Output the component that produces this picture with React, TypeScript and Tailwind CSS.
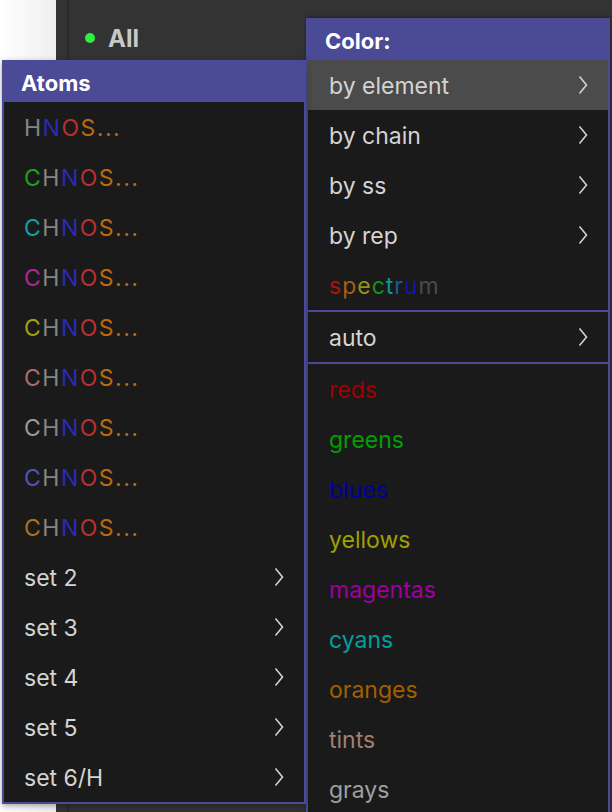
import React from 'react';

const GRAY = '#858585';
const N_BLUE = '#2a2ab8';
const O_RED = '#b83030';
const S_ORANGE = '#b86a10';

// first-letter colours of the atom sets
const ATOM_ROWS: (string | null)[] = [
  null,
  '#22a022',
  '#14a0a0',
  '#b02890',
  '#a0a012',
  '#b06c6c',
  '#9a9a9a',
  '#5454b4',
  '#b07020',
];

const SETS = ['set 2', 'set 3', 'set 4', 'set 5', 'set 6/H'];

const SPECTRUM: [string, string][] = [
  ['s', '#a81414'],
  ['p', '#a86010'],
  ['e', '#949414'],
  ['c', '#149414'],
  ['t', '#149494'],
  ['r', '#1460a0'],
  ['u', '#1414a8'],
  ['m', '#4a4a4a'],
];

const COLOR_SETS: [string, string][] = [
  ['reds', '#a00000'],
  ['greens', '#00a000'],
  ['blues', '#0000a0'],
  ['yellows', '#a0a000'],
  ['magentas', '#a000a0'],
  ['cyans', '#00a0a0'],
  ['oranges', '#a06000'],
  ['tints', '#a08070'],
  ['grays', '#a0a0a0'],
];

function Chevron() {
  return (
    <svg width="10" height="20" viewBox="0 0 10 20" fill="none">
      <path d="M1.5 1.5L8.5 10L1.5 18.5" stroke="#d2d2d2" strokeWidth="1.6" />
    </svg>
  );
}

function Row({ children, arrow, highlight, px }: {
  children: React.ReactNode; arrow?: boolean; highlight?: boolean; px: string;
}) {
  return (
    <div className={`h-[50px] flex items-center justify-between ${px} ${highlight ? 'bg-[#4b4b4b]' : ''}`}>
      <span className="text-[23px] text-[#d4d4d4] leading-none pt-[3px]">{children}</span>
      {arrow && <Chevron />}
    </div>
  );
}

export default function App() {
  return (
    <div className="relative w-[612px] h-[812px] overflow-hidden flex font-['Inter','Liberation_Sans',sans-serif]">
      {/* Light strip on the left */}
      <div className="w-[56px] h-full bg-gradient-to-r from-white to-[#efefef]" />

      {/* Dark side panel */}
      <div className="flex-1 h-full bg-[#333333] flex">
        <div className="w-[11px]" />
        <div className="w-[2px] h-full bg-[#2a2a2a]" />
        <div className="flex-1 pt-[19px]">
          <div className="flex items-center gap-[13px] pl-[16px] h-[38px]">
            <div className="w-[10px] h-[10px] rounded-full bg-[#2cf040]" />
            <span className="text-[24px] font-bold text-[#c8c8c8] leading-none pt-[2px]">All</span>
          </div>
        </div>
      </div>

      {/* Color menu */}
      <div className="absolute left-[306px] top-[18px] w-[304px] h-[800px] border-2 border-[#4b4a96] bg-[#1a1a1a] shadow-[0_-1px_3px_rgba(0,0,0,0.4)]">
        <div className="h-[40px] bg-[#4b4a96] flex items-center pl-[17px]">
          <span className="text-[22px] font-bold text-white leading-none pt-[1px]">Color:</span>
        </div>
        <Row px="pl-[21px] pr-[20px]" arrow highlight>by element</Row>
        <Row px="pl-[21px] pr-[20px]" arrow>by chain</Row>
        <Row px="pl-[21px] pr-[20px]" arrow>by ss</Row>
        <Row px="pl-[21px] pr-[20px]" arrow>by rep</Row>
        <div className="h-[50px] flex items-center pl-[21px]">
          <span className="text-[23px] leading-none tracking-[1px] pt-[3px]">
            {SPECTRUM.map(([ch, c], i) => (
              <span key={i} style={{ color: c }}>{ch}</span>
            ))}
          </span>
        </div>
        <div className="border-y-2 border-[#4b4a96]">
          <Row px="pl-[21px] pr-[20px]" arrow>auto</Row>
        </div>
        {COLOR_SETS.map(([name, c]) => (
          <div key={name} className="h-[50px] flex items-center pl-[21px]">
            <span className="text-[23px] leading-none pt-[3px]" style={{ color: c }}>{name}</span>
          </div>
        ))}
      </div>

      {/* Atoms menu */}
      <div className="absolute left-[2px] top-[60px] w-[304px] border-2 border-[#4b4a96] bg-[#1a1a1a] shadow-[0_2px_6px_rgba(0,0,0,0.35)]">
        <div className="h-[40px] bg-[#4b4a96] flex items-center pl-[17px]">
          <span className="text-[22px] font-bold text-white leading-none pt-[1px]">Atoms</span>
        </div>
        {ATOM_ROWS.map((c, i) => (
          <div key={i} className="h-[50px] flex items-center pl-[20px]">
            <span className="text-[23px] leading-none tracking-[1.5px] pt-[3px]">
              {c && <span style={{ color: c }}>C</span>}
              <span style={{ color: GRAY }}>H</span>
              <span style={{ color: N_BLUE }}>N</span>
              <span style={{ color: O_RED }}>O</span>
              <span style={{ color: S_ORANGE }}>S...</span>
            </span>
          </div>
        ))}
        {SETS.map(s => (
          <Row key={s} px="pl-[20px] pr-[20px]" arrow>{s}</Row>
        ))}
      </div>
    </div>
  );
}
